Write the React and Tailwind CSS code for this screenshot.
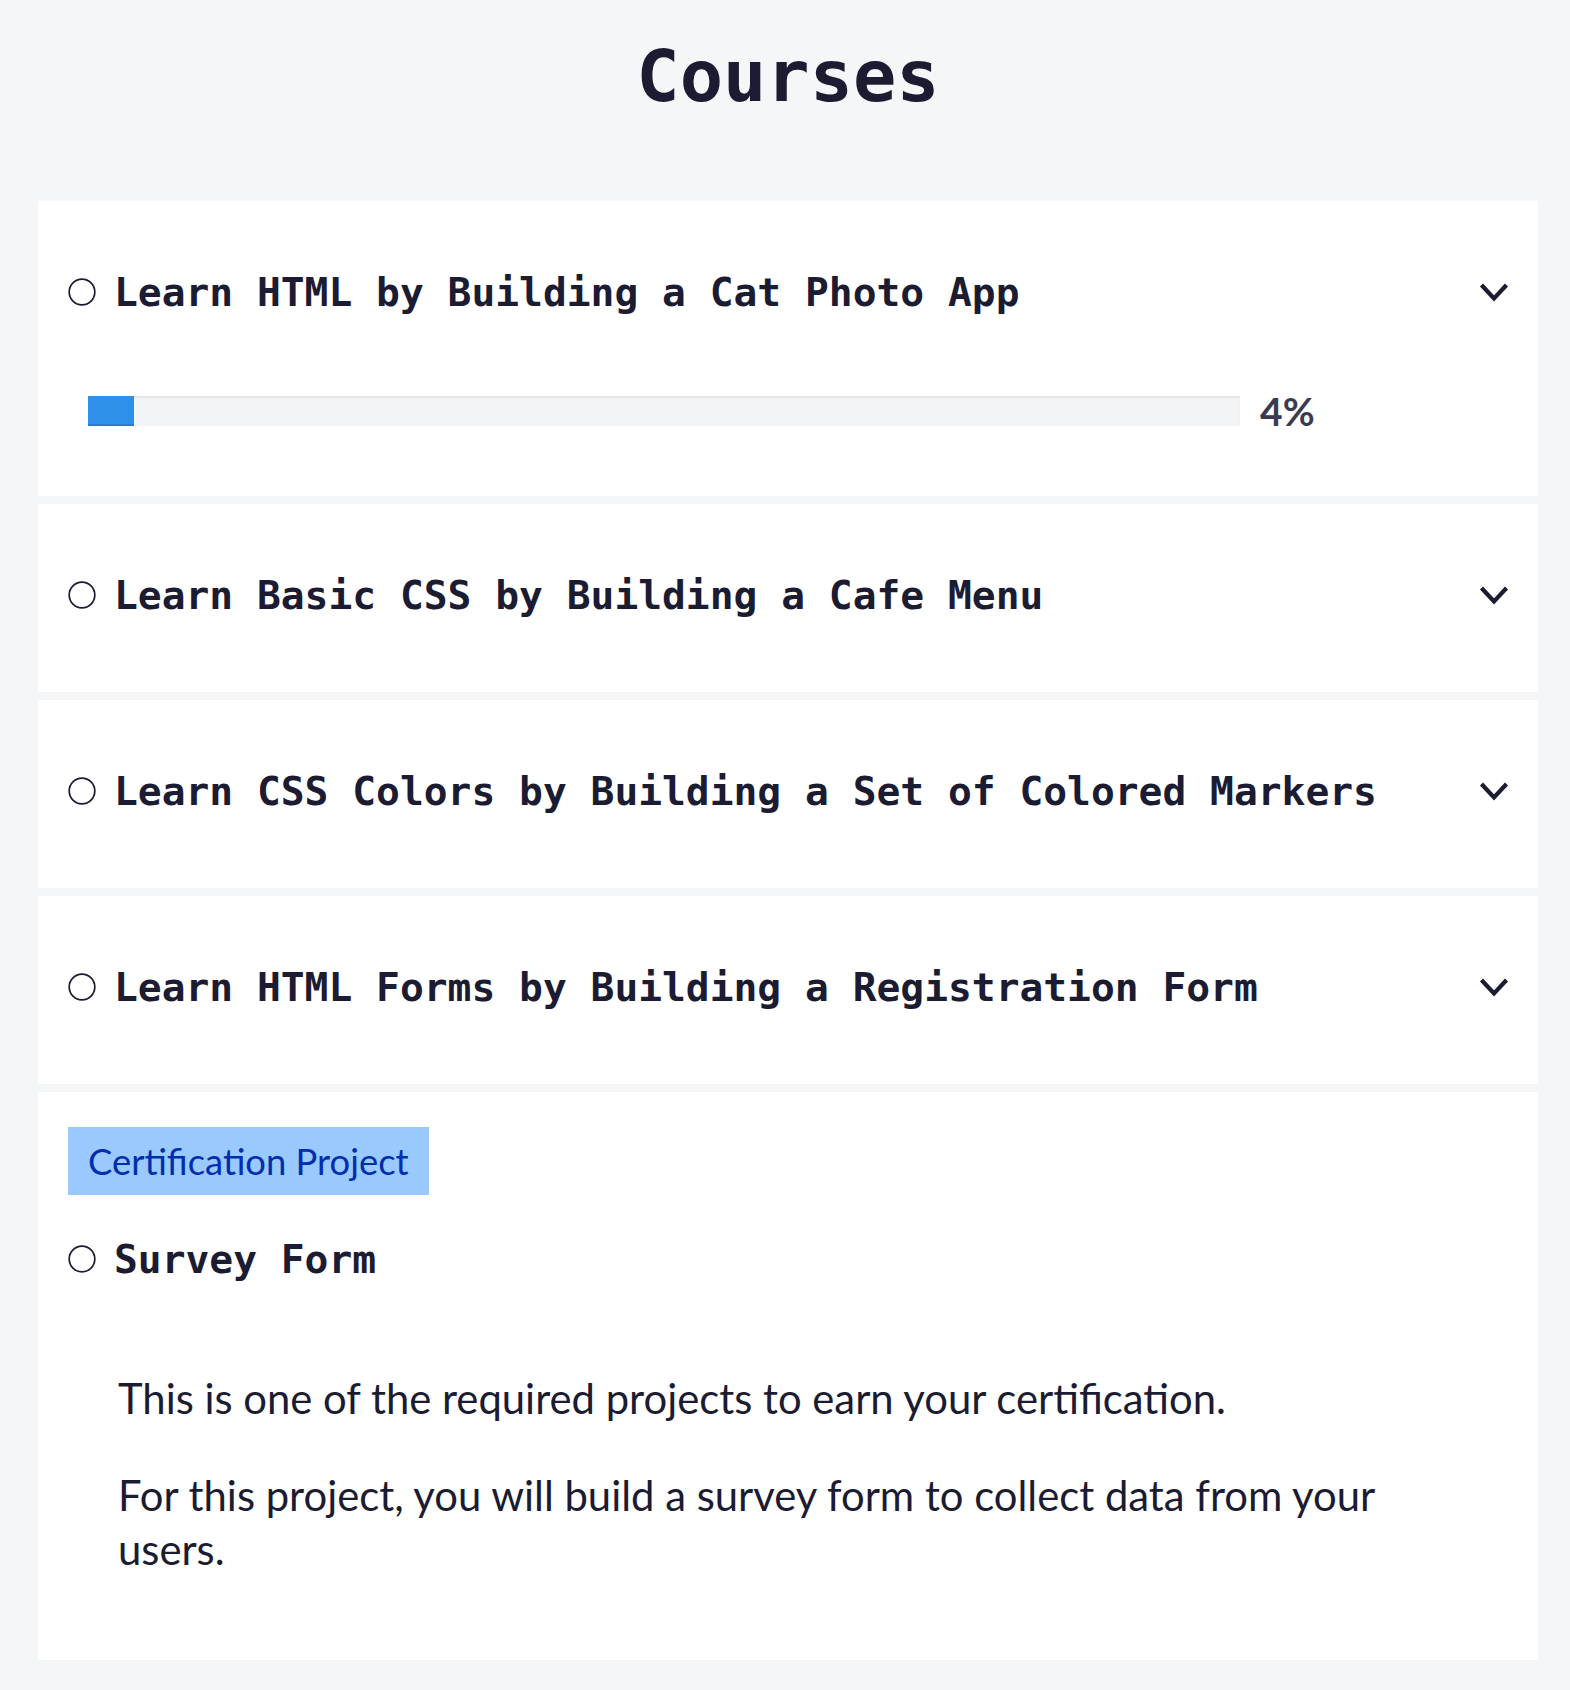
const mono = { fontFamily: '"DejaVu Sans Mono", "Liberation Mono", monospace' };

const courses = [
  { title: "Learn HTML by Building a Cat Photo App", progress: 4 },
  { title: "Learn Basic CSS by Building a Cafe Menu" },
  { title: "Learn CSS Colors by Building a Set of Colored Markers" },
  { title: "Learn HTML Forms by Building a Registration Form" }
];

function Circle() {
  return (
    <svg className="shrink-0" width="28" height="28" viewBox="0 0 28 28">
      <circle cx="14" cy="14" r="12.8" fill="none" stroke="#1b1b32" strokeWidth="1.7" />
    </svg>
  );
}

function Chevron() {
  return (
    <svg className="shrink-0" width="30" height="20" viewBox="0 0 30 20">
      <polyline points="2.5,3 15,16.5 27.5,3" fill="none" stroke="#1b1b32" strokeWidth="4.2" />
    </svg>
  );
}

function CourseTitle({ children }) {
  return (
    <h3 className="ml-[18px] flex-1 text-[39.6px] font-bold leading-[48px] text-[#1b1b32]" style={mono}>
      {children}
    </h3>
  );
}

function CourseCard({ title, progress }) {
  return (
    <section className={`bg-white pl-[30px] pr-[29px] pt-[67px] ${progress != null ? "pb-[70px]" : "pb-[73px]"}`}>
      <div className="flex items-center">
        <Circle />
        <CourseTitle>{title}</CourseTitle>
        <Chevron />
      </div>
      {progress != null && (
        <div className="mt-[80px] flex items-center pl-[20px]">
          <div className="h-[30px] w-[1152px] bg-[#f3f4f6] shadow-[inset_0_2px_2px_rgba(0,0,0,0.07)]">
            <div
              className="h-full border-b-2 border-[#2a7dcb] bg-[#2f90e7]"
              style={{ width: `${progress}%` }}
            />
          </div>
          <span className="ml-[20px] text-[39px] font-bold leading-[30px] text-[#3b3b4f]">{progress}%</span>
        </div>
      )}
    </section>
  );
}

export default function App() {
  return (
    <div className="min-h-[1690px] bg-[#f5f6f7] pt-[34px]" style={{ fontFamily: "Lato, sans-serif" }}>
      <div className="ml-[38px] w-[1500px]">
        <h1 className="text-center text-[72px] font-bold leading-[84px] text-[#1b1b32]" style={mono}>
          Courses
        </h1>
        <div className="mt-[83px] flex flex-col gap-[8px]">
          {courses.map((c) => (
            <CourseCard key={c.title} title={c.title} progress={c.progress} />
          ))}
          <section className="bg-white px-[30px] pt-[35px] pb-[84px]">
            <span className="inline-block bg-[#99c9ff] px-[20px] py-[7px] text-[36.4px] leading-[54px] text-[#002ead]">
              Certification Project
            </span>
            <div className="mt-[40px] flex items-center">
              <Circle />
              <CourseTitle>Survey Form</CourseTitle>
            </div>
            <div className="ml-[50px] mt-[88px] w-[1322px] text-[41.8px] leading-[54px] text-[#1b1b32]">
              <p className="mb-[43px]">This is one of the required projects to earn your certification.</p>
              <p>For this project, you will build a survey form to collect data from your users.</p>
            </div>
          </section>
        </div>
      </div>
    </div>
  );
}
